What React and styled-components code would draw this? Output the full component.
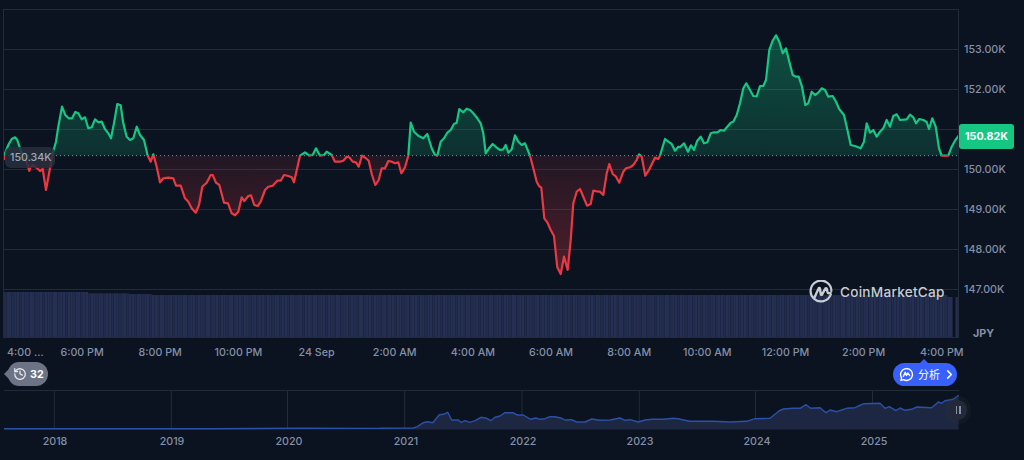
import React from "react";
import styled, { createGlobalStyle } from "styled-components";

const BG = "#0b1320";
const GRID = "#222b38";
const TXT = "#8590a8";
const BASE = 155.7;

const Global = createGlobalStyle`
  html, body { margin: 0; padding: 0; background: ${BG}; }
  body { font-family: Inter, "Noto Sans CJK SC", sans-serif; width: 1024px; height: 460px; overflow: hidden; }
`;

const z1 = [12,210,15,190,25,165,35,147,45,142,52,150,60,175,70,200,80,215,88,243,92,230,100,225,112,235,120,243,128,237,138,300,150,235,158,190,168,155,175,110,186,50,196,75,206,85,216,85,226,66,235,70,245,88,255,82,265,115,275,112,285,88,295,97,305,95,315,117,325,130,333,145,342,100,352,42,362,46,370,100,380,140,390,150,400,145,410,110,420,135,432,150,443,197,452,215,460,193,470,230,480,277,490,265,505,263,520,265,528,287,542,287,555,325,565,335,575,355,587,368,597,345,607,290,620,278,632,255,638,255,648,278,658,285,672,338,684,340,695,370,705,376,715,365,725,322,733,333,745,318,753,316,763,345,773,348,782,335,795,300,805,290,818,287,832,272,842,272,852,255,865,258,875,262,882,277,900,197,915,187,928,197,938,195,948,175,960,197,972,195,980,185,995,195,1005,215];
const z2 = [0,215,10,212,20,200,28,202,38,215,48,217,56,230,66,197,78,205,86,212,96,255,106,285,116,270,125,235,135,235,145,213,155,215,165,220,175,217,184,250,195,232,205,197,212,98,222,125,235,137,250,145,262,132,275,175,285,195,292,197,302,155,312,145,322,128,332,120,342,102,350,98,358,57,370,67,380,56,390,60,400,70,412,85,422,100,430,130,437,190,447,175,458,162,470,173,480,180,490,178,497,165,505,188,515,178,525,136,535,155,545,165,555,160,570,197,580,235,590,275,597,288,604,293,613,385,622,397,632,420,642,438,652,532,662,552,672,500,683,540,692,450,700,340,710,305,720,297,730,320,741,347,752,342,760,302,770,304,780,305,790,315,800,250,808,222,818,252,828,260,838,278,850,245,858,235,870,232,880,225,890,210,897,193,905,200,916,257,928,238,945,203,955,207,960,197,975,147,985,155,995,162,1005,182,1015,170];
const z3 = [0,382,12,370,24,395,33,376,42,390,52,362,62,350,72,370,82,367,92,340,102,337,112,337,122,330,132,332,142,320,152,308,160,305,170,285,180,250,190,205,199,190,210,210,220,228,230,229,240,198,250,198,258,180,268,90,278,62,288,46,298,65,308,100,318,85,328,125,338,165,348,170,356,170,366,200,376,255,385,250,395,215,405,225,415,218,425,205,435,210,445,230,458,228,468,245,478,268,492,285,500,320,512,375,525,378,542,385,552,365,560,310,570,338,580,330,590,350,600,335,610,325,620,300,630,320,640,288,650,283,660,300,680,298,690,284,700,292,708,310,718,297,730,300,740,306,747,327,757,295,767,320,777,385,785,407,805,407,815,380,825,362,836,347];

const conv = (arr, ox, oy) => {
  const out = [];
  for (let i = 0; i < arr.length; i += 2) out.push([ox + arr[i] / 3, oy + arr[i + 1] / 3]);
  return out;
};
const line = [...conv(z1, 0, 90), ...conv(z2, 340, 90), ...conv(z3, 680, 20)];
const pts = line.map(p => `${p[0].toFixed(1)},${p[1].toFixed(1)}`).join(" ");
const area = `${line[0][0].toFixed(1)},${BASE} ${pts} ${line[line.length - 1][0].toFixed(1)},${BASE}`;

const m2 = [0,145,100,144,112,140,130,128,142,125,158,128,178,104,190,103,203,97,215,120,235,120,243,127,255,122,270,127,285,122,303,112,320,115,332,122,345,112,360,108,375,98,398,98,412,105,430,105,452,118,468,114,480,118,495,116,510,110,525,110,545,115,555,120,575,119,590,126,615,126,635,117,660,121,690,120,720,114,735,121,750,119,775,126,795,120,815,118,850,118,880,115,900,117];
const m3 = [0,118,30,124,100,124,150,126,200,124,225,116,270,115,297,93,310,87,340,85,360,85,378,74,392,85,420,83,438,98,450,90,470,95,485,90,500,85,525,83,535,78,552,71,600,70,615,85,628,80,648,92,660,84,675,91,695,88,710,81,755,83,775,66,785,70,795,62,820,58,836,46];
const mline = [[4, 428.7], [210, 428.7], [300, 428.2], [380, 428.4], ...conv(m2, 380, 380), ...conv(m3, 680, 380)];
const mpts = mline.map(p => `${p[0].toFixed(1)},${(p[1] - 390).toFixed(1)}`).join(" ");
const marea = `4,39.4 ${mpts} 958.5,39.4`;

const volTop = (x) => {
  if (x < 87) return 292;
  if (x < 127) return 293.3;
  if (x < 150) return 294;
  if (x < 945) return 295;
  return 297;
};
const bars = [];
for (let x = 4; x < 951; x += 2.55) bars.push(x);

const Page = styled.div`
  width: 1024px;
  height: 460px;
  background: ${BG};
  position: relative;
  overflow: hidden;
`;
const MainRow = styled.div`
  display: flex;
  height: 338px;
  padding: 9px 0 0 3px;
  box-sizing: border-box;
`;
const Plot = styled.div`
  width: 956px;
  height: 329px;
  border: 1px solid ${GRID};
  box-sizing: border-box;
  flex-shrink: 0;
`;
const ChartSvg = styled.svg`
  display: block;
  width: 954px;
  height: 327px;
`;
const PriceAxis = styled.div`
  flex: 1;
  padding: 31px 0 0 5px;
  display: flex;
  flex-direction: column;
`;
const PriceLabel = styled.div`
  height: 40px;
  flex-shrink: 0;
  line-height: 20px;
  font-size: 10.7px;
  font-weight: 500;
  color: ${TXT};
`;
const Currency = styled.div`
  flex-shrink: 0;
  margin: 4px 0 0 9px;
  line-height: 20px;
  font-size: 10.7px;
  font-weight: 700;
  color: ${TXT};
`;
const BaseTag = styled.div`
  position: absolute;
  left: 5px;
  top: 147px;
  width: 50px;
  height: 21px;
  line-height: 21px;
  padding-left: 5px;
  box-sizing: border-box;
  border-radius: 6px;
  font-size: 10.7px;
  font-weight: 500;
  color: #a0a7b6;
  background: rgba(40, 46, 60, 0.86);
`;
const CurrentTag = styled.div`
  position: absolute;
  left: 959px;
  top: 124px;
  width: 55px;
  height: 25px;
  line-height: 25px;
  text-align: center;
  border-radius: 3px;
  background: #16c784;
  color: #fff;
  font-size: 10.7px;
  font-weight: 700;
`;
const Brand = styled.div`
  position: absolute;
  left: 809px;
  top: 279px;
  display: flex;
  align-items: center;
  gap: 7px;
  color: #c8ccd4;
  font-size: 13.6px;
  font-weight: 500;
  letter-spacing: 0.25px;
  line-height: 24px;
`;
const BrandName = styled.span`
  padding-top: 1px;
`;
const TimeAxis = styled.div`
  display: flex;
  height: 24px;
  padding-top: 8px;
  box-sizing: border-box;
`;
const FirstTick = styled.span`
  width: 43px;
  flex-shrink: 0;
  padding-left: 7px;
  box-sizing: border-box;
  font-size: 10.7px;
  line-height: 14px;
  font-weight: 500;
  color: ${TXT};
  white-space: nowrap;
`;
const TimeTick = styled.span`
  width: 78.17px;
  flex-shrink: 0;
  text-align: center;
  font-size: 10.7px;
  line-height: 14px;
  font-weight: 500;
  color: ${TXT};
  white-space: nowrap;
`;
const EventRow = styled.div`
  display: flex;
  justify-content: space-between;
  align-items: center;
  height: 24px;
  padding: 0 67px 0 8px;
`;
const HistoryPill = styled.div`
  position: relative;
  display: flex;
  align-items: center;
  gap: 3px;
  width: 40px;
  height: 24px;
  box-sizing: border-box;
  padding-left: 5px;
  border-radius: 11px 12px 12px 11px;
  background: #6b7385;
  color: #fff;
  font-size: 10.7px;
  font-weight: 700;
  &::before {
    content: "";
    position: absolute;
    left: -4px;
    top: 7px;
    border-top: 5px solid transparent;
    border-bottom: 5px solid transparent;
    border-right: 5px solid #6b7385;
  }
`;
const AnalyzeButton = styled.div`
  position: relative;
  display: flex;
  align-items: center;
  height: 23px;
  width: 64px;
  box-sizing: border-box;
  padding: 0 0 0 6px;
  border-radius: 12px;
  background: #3861fb;
  color: #fff;
  font-size: 11px;
  white-space: nowrap;
  &::before {
    content: "";
    position: absolute;
    left: 27px;
    top: -4px;
    border-left: 4px solid transparent;
    border-right: 4px solid transparent;
    border-bottom: 4px solid #3861fb;
  }
`;
const AnalyzeText = styled.span`
  margin: 0 5px 0 4px;
`;
const MiniWrap = styled.div`
  position: relative;
  margin: 4px 0 0 4px;
  width: 954.5px;
  border-top: 1px solid ${GRID};
`;
const MiniSvg = styled.svg`
  display: block;
  width: 954.5px;
  height: 39px;
`;
const Handle = styled.div`
  position: absolute;
  left: 945px;
  top: 9px;
  width: 18px;
  height: 20px;
  border-radius: 9px;
  background: #232936;
  box-shadow: 0 0 0 4px rgba(42, 48, 60, 0.22);
  display: flex;
  align-items: center;
  justify-content: center;
  gap: 2px;
  &::before, &::after {
    content: "";
    width: 1.5px;
    height: 8px;
    background: #8590a8;
  }
`;
const YearAxis = styled.div`
  display: flex;
  gap: 7px;
  padding-top: 5px;
`;
const YearLabel = styled.span`
  width: 110px;
  flex-shrink: 0;
  text-align: center;
  font-size: 10.7px;
  line-height: 14px;
  font-weight: 500;
  color: ${TXT};
`;

const prices = ["153.00K", "152.00K", "", "150.00K", "149.00K", "148.00K", "147.00K"];
const grid = [49, 89, 129, 169, 209, 249, 289];
const times = ["6:00 PM", "8:00 PM", "10:00 PM", "24 Sep", "2:00 AM", "4:00 AM", "6:00 AM", "8:00 AM", "10:00 AM", "12:00 PM", "2:00 PM", "4:00 PM"];
const years = ["2018", "2019", "2020", "2021", "2022", "2023", "2024", "2025"];
const yearLines = [54.3, 171.3, 287.5, 404.7, 522, 639.3, 755.5, 872.5];

export default function App() {
  return (
    <Page>
      <Global />
      <MainRow>
        <Plot>
          <ChartSvg viewBox="4 10 954 327">
            <defs>
              <linearGradient id="upFill" gradientUnits="userSpaceOnUse" x1="0" y1="35" x2="0" y2="156">
                <stop offset="0" stopColor="#16c784" stopOpacity="0.34" />
                <stop offset="1" stopColor="#16c784" stopOpacity="0.16" />
              </linearGradient>
              <linearGradient id="downFill" gradientUnits="userSpaceOnUse" x1="0" y1="156" x2="0" y2="275">
                <stop offset="0" stopColor="#ea3943" stopOpacity="0.1" />
                <stop offset="1" stopColor="#ea3943" stopOpacity="0.3" />
              </linearGradient>
              <clipPath id="above"><rect x="0" y="0" width="1024" height={BASE} /></clipPath>
              <clipPath id="below"><rect x="0" y={BASE} width="1024" height="200" /></clipPath>
            </defs>
            {grid.map(y => <line key={y} x1="4" x2="958" y1={y + 0.5} y2={y + 0.5} stroke={GRID} />)}
            <polygon points={area} fill="url(#upFill)" clipPath="url(#above)" />
            <polygon points={area} fill="url(#downFill)" clipPath="url(#below)" />
            <line x1="4" x2="958" y1={BASE} y2={BASE} stroke="#8a909c" strokeWidth="1" strokeDasharray="1 3" />
            <polyline points={pts} fill="none" stroke="#16c784" strokeWidth="2.2" strokeLinejoin="round" clipPath="url(#above)" />
            <polyline points={pts} fill="none" stroke="#ea3943" strokeWidth="2.2" strokeLinejoin="round" clipPath="url(#below)" />
            {bars.map(x => <rect key={x} x={x} y={volTop(x)} width="2.55" height={337 - volTop(x)} fill={Math.round((x - 4) / 2.55) % 3 === 0 ? "#212b4a" : "#252f52"} />)}
            <rect x="955.5" y="297" width="2.4" height="40" fill="#252f52" />
          </ChartSvg>
        </Plot>
        <PriceAxis>
          {prices.map((p, i) => <PriceLabel key={i}>{p}</PriceLabel>)}
          <Currency>JPY</Currency>
        </PriceAxis>
      </MainRow>
      <BaseTag>150.34K</BaseTag>
      <CurrentTag>150.82K</CurrentTag>
      <Brand>
        <svg width="24" height="24" viewBox="0 0 24 24" fill="none" stroke="#c8ccd4" strokeWidth="2.2" strokeLinecap="round" strokeLinejoin="round">
          <path d="M21.8 14.5A10.4 10.4 0 1 1 22.4 11" />
          <path d="M5.5 17.5 9.6 8.4c.4-.8 1.3-.6 1.4.2l.7 5.6c.1.8 1 1 1.4.2l3.2-5.8c.4-.8 1.3-.6 1.5.2l.8 3.6c.3 1 1.6 1.4 3 .4" strokeWidth="2.4" />
        </svg>
        <BrandName>CoinMarketCap</BrandName>
      </Brand>
      <TimeAxis>
        <FirstTick>4:00 ...</FirstTick>
        {times.map(t => <TimeTick key={t}>{t}</TimeTick>)}
      </TimeAxis>
      <EventRow>
        <HistoryPill>
          <svg width="14" height="14" viewBox="0 0 24 24" fill="none" stroke="#e6e8ec" strokeWidth="2.2" strokeLinecap="round" strokeLinejoin="round">
            <path d="M3 12a9 9 0 1 0 3-6.7L3 8" />
            <path d="M3 3v5h5" />
            <path d="M12 7v5l4 2" />
          </svg>
          32
        </HistoryPill>
        <AnalyzeButton>
          <svg width="15" height="15" viewBox="0 0 24 24" fill="none" stroke="#fff" strokeWidth="2.2" strokeLinecap="round" strokeLinejoin="round">
            <path d="M12 2.5a9.5 9.5 0 1 1-4.6 17.8L3 21.5l1.2-4.2A9.5 9.5 0 0 1 12 2.5Z" />
            <path d="m7 15 3-6.5 2 5 2-4 3 4" />
          </svg>
          <AnalyzeText>分析</AnalyzeText>
          <svg width="9" height="9" viewBox="0 0 10 10" fill="none" stroke="#fff" strokeWidth="1.7" strokeLinecap="round" strokeLinejoin="round">
            <path d="m3 1 4 4-4 4" />
          </svg>
        </AnalyzeButton>
      </EventRow>
      <MiniWrap>
        <MiniSvg viewBox="4 1 954.5 39">
          {yearLines.map(x => <line key={x} x1={x} x2={x} y1="0" y2="39" stroke={GRID} />)}
          <polygon points={marea} fill="#1e2742" />
          <polyline points={mpts} fill="none" stroke="#2b50a8" strokeWidth="1.4" strokeLinejoin="round" />
        </MiniSvg>
        <Handle />
      </MiniWrap>
      <YearAxis>
        {years.map(t => <YearLabel key={t}>{t}</YearLabel>)}
      </YearAxis>
    </Page>
  );
}
